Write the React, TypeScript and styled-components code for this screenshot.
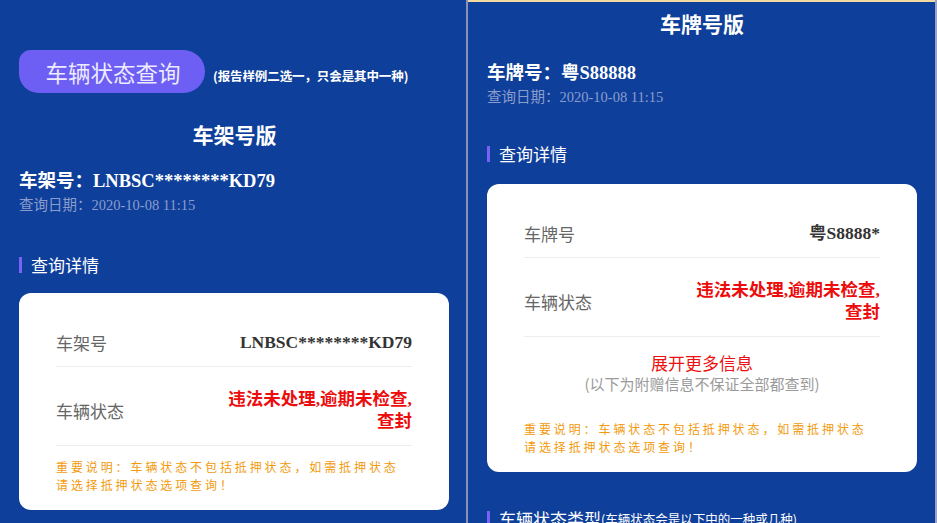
import React from "react";
import styled, { createGlobalStyle } from "styled-components";

const SANS = `"Noto Sans CJK SC", "Noto Sans", sans-serif`;
const MIXED = `"Liberation Serif", "Noto Sans CJK SC", serif`;

const Global = createGlobalStyle`
  html, body { margin: 0; padding: 0; background: #0e3f9a; }
  body { font-family: ${SANS}; overflow: hidden; }
  * { box-sizing: border-box; }
`;

const Page = styled.div`
  display: flex;
  width: 937px;
  height: 523px;
  overflow: hidden;
  background: #0e3f9a;
`;

const Panel = styled.div<{ $w: number; $top: boolean }>`
  width: ${(p) => p.$w}px;
  flex: none;
  display: flex;
  flex-direction: column;
  padding: ${(p) => (p.$top ? "7px 18px 0 19px" : "50px 16px 0 19px")};
  border-top: ${(p) => (p.$top ? "2px solid #f2d9a2" : "none")};
`;

const VRule = styled.div`
  width: 2px;
  flex: none;
  background: #8891b6;
`;

const EdgeRule = styled.div`
  width: 2px;
  flex: none;
  background: #9aa3c0;
`;

const PillRow = styled.div`
  display: flex;
  align-items: center;
  gap: 8px;
`;

const Pill = styled.div`
  width: 186px;
  height: 43px;
  display: flex;
  align-items: center;
  justify-content: center;
  background: #6d5ef4;
  color: #ecebff;
  font-size: 22.5px;
  border-radius: 12px 22px 22px 20px;
  padding-left: 2px;
`;

const PillNote = styled.span`
  margin-top: 8px;
  color: #ffffff;
  font-size: 12.5px;
  font-weight: 700;
  letter-spacing: -0.1px;
`;

const Title = styled.div<{ $mt: number }>`
  margin-top: ${(p) => p.$mt}px;
  text-align: center;
  color: #fff;
  font-size: 21px;
  font-weight: 700;
  line-height: 28px;
`;

const IdLine = styled.div<{ $mt: number }>`
  margin-top: ${(p) => p.$mt}px;
  color: #fff;
  font-family: ${MIXED};
  font-size: 18.5px;
  font-weight: 700;
  line-height: 26px;
  white-space: nowrap;
`;

const DateLine = styled.div`
  color: #8b9dcc;
  font-family: ${MIXED};
  font-size: 14.5px;
  line-height: 22px;
`;

const Section = styled.div<{ $mt: number }>`
  margin-top: ${(p) => p.$mt}px;
  display: flex;
  align-items: center;
  color: #fff;
  line-height: 24px;
  white-space: nowrap;
  &::before {
    content: "";
    width: 3px;
    height: 16px;
    margin-right: 9px;
    background: #7a62f6;
    flex: none;
  }
`;

const SectionText = styled.span`
  font-size: 17px;
`;

const SectionSub = styled.span`
  font-size: 12.5px;
`;

const Card = styled.div<{ $mt: number }>`
  margin-top: ${(p) => p.$mt}px;
  width: 430px;
  background: #fff;
  border-radius: 12px;
  padding: 26px 37px 16px;
`;

const Row = styled.div<{ $tall?: boolean }>`
  display: flex;
  align-items: center;
  justify-content: space-between;
  min-height: 48px;
  padding: ${(p) => (p.$tall ? "22px 0 13px" : "0")};
  border-bottom: 1px solid #eeeeee;
`;

const Label = styled.span`
  color: #666;
  font-size: 17px;
`;

const Value = styled.span<{ $red?: boolean }>`
  font-family: ${MIXED};
  font-weight: 700;
  font-size: 17.5px;
  color: ${(p) => (p.$red ? "#ec0c0c" : "#333")};
  text-align: right;
  line-height: 21.5px;
  max-width: 200px;
`;

const Expand = styled.div`
  text-align: center;
  padding: 15px 0 14px;
`;

const ExpandTitle = styled.div`
  color: #ec1010;
  font-size: 17px;
  line-height: 22px;
`;

const ExpandSub = styled.div`
  color: #9a9a9a;
  font-size: 15px;
  line-height: 20px;
`;

const Note = styled.div`
  padding-top: 12px;
  color: #f29a0c;
  font-size: 12px;
  letter-spacing: 2.9px;
  line-height: 18px;
`;

const NOTE = "重要说明：车辆状态不包括抵押状态，如需抵押状态请选择抵押状态选项查询！";

function Header(props: { title: string; idLabel: string; id: string; mt: number; idMt: number }) {
  return (
    <>
      <Title $mt={props.mt}>{props.title}</Title>
      <IdLine $mt={props.idMt}>
        {props.idLabel}：{props.id}
      </IdLine>
      <DateLine>查询日期：2020-10-08 11:15</DateLine>
    </>
  );
}

export default function App() {
  return (
    <>
      <Global />
      <Page>
        <Panel $w={466} $top={false}>
          <PillRow>
            <Pill>车辆状态查询</Pill>
            <PillNote>(报告样例二选一，只会是其中一种)</PillNote>
          </PillRow>
          <Header title="车架号版" idLabel="车架号" id="LNBSC********KD79" mt={27} idMt={20} />
          <Section $mt={37}>
            <SectionText>查询详情</SectionText>
          </Section>
          <Card $mt={16}>
            <Row>
              <Label>车架号</Label>
              <Value>LNBSC********KD79</Value>
            </Row>
            <Row $tall>
              <Label>车辆状态</Label>
              <Value $red>违法未处理,逾期未检查,查封</Value>
            </Row>
            <Note>{NOTE}</Note>
          </Card>
        </Panel>
        <VRule />
        <Panel $w={467} $top>
          <Header title="车牌号版" idLabel="车牌号" id="粤S88888" mt={0} idMt={23} />
          <Section $mt={34}>
            <SectionText>查询详情</SectionText>
          </Section>
          <Card $mt={18}>
            <Row>
              <Label>车牌号</Label>
              <Value>粤S8888*</Value>
            </Row>
            <Row $tall>
              <Label>车辆状态</Label>
              <Value $red>违法未处理,逾期未检查,查封</Value>
            </Row>
            <Expand>
              <ExpandTitle>展开更多信息</ExpandTitle>
              <ExpandSub>(以下为附赠信息不保证全部都查到)</ExpandSub>
            </Expand>
            <Note>{NOTE}</Note>
          </Card>
          <Section $mt={35}>
            <SectionText>车辆状态类型</SectionText>
            <SectionSub>(车辆状态会是以下中的一种或几种)</SectionSub>
          </Section>
        </Panel>
        <EdgeRule />
      </Page>
    </>
  );
}
